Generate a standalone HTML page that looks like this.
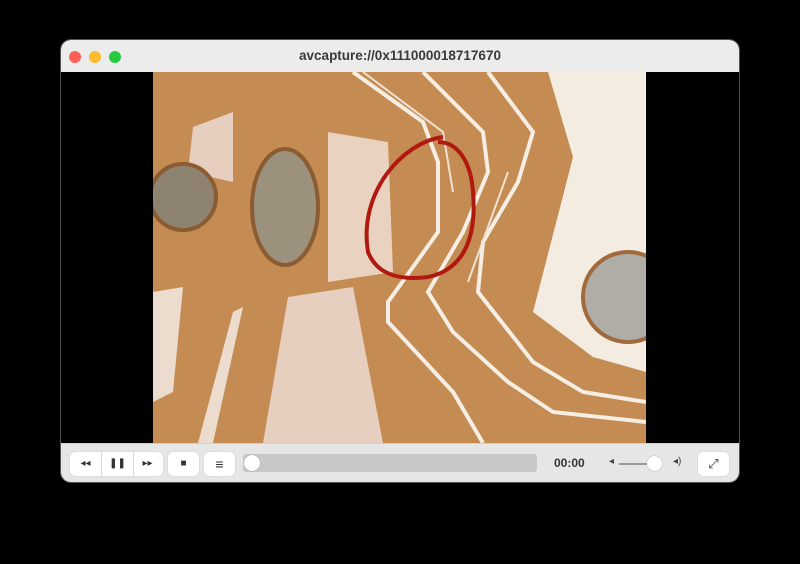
<!DOCTYPE html>
<html><head><style>
body{margin:0;width:800px;height:564px;background:#000;overflow:hidden;font-family:"Liberation Sans",sans-serif}
.win{position:absolute;left:61px;top:40px;width:678px;height:442px;border-radius:10px;overflow:hidden;background:#000;box-shadow:0 0 0 1px #555}
.tb{position:absolute;left:0;top:0;width:678px;height:32px;background:#ececec;text-align:center;line-height:32px;font-size:13.5px;font-weight:bold;color:#3a3a3a}
.dot{position:absolute;top:11px;width:12px;height:12px;border-radius:50%}
.cb{position:absolute;left:0;top:403px;width:678px;height:39px;background:#e6e6e6;border-top:1px solid #d0d0d0}
.btn{position:absolute;top:8px;height:24px;background:#fff;border-radius:5px;box-shadow:0 0 1px #aaa;font-size:10px;color:#333;text-align:center;line-height:24px}
</style></head><body>
<div class="win">
<div class="tb">avcapture://0x111000018717670
<div class="dot" style="left:8px;background:#fe5f57"></div>
<div class="dot" style="left:28px;background:#febc2e"></div>
<div class="dot" style="left:48px;background:#28c840"></div>
</div>
<svg style="position:absolute;left:92px;top:32px" width="493" height="371" viewBox="0 0 493 371">
<rect width="493" height="371" fill="#c48b52"/>
<polygon points="395,0 493,0 493,300 440,285 380,240 420,85" fill="#f4ebe1"/>
<polygon points="175,60 235,70 240,200 175,210" fill="#e9d3c0"/>
<polygon points="135,225 200,215 230,371 110,371" fill="#e6cfbf"/>
<polygon points="40,55 80,40 80,110 35,100" fill="#e6cfbf"/>
<polygon points="0,220 30,215 20,320 0,330" fill="#ecdccd"/>
<polygon points="80,240 90,235 60,371 45,371" fill="#ecdccd"/>
<g fill="none" stroke="#f6eee4" stroke-width="4">
<polyline points="200,0 270,50 285,90 285,160 235,230 235,250 300,320 330,371"/>
<polyline points="270,0 330,60 335,100 310,160 275,220 300,260 355,310 400,340 493,350"/>
<polyline points="335,0 380,60 365,110 330,170 325,220 380,290 430,320 493,330"/>
</g>
<g fill="none" stroke="#f0e2d2" stroke-width="2">
<polyline points="210,0 290,60 300,120"/>
<polyline points="355,100 315,210"/>
</g>
<ellipse cx="30" cy="125" rx="33" ry="33" fill="#8e8370" stroke="#8b5b32" stroke-width="4"/>
<ellipse cx="132" cy="135" rx="33" ry="58" fill="#9c917c" stroke="#8b5b32" stroke-width="4"/>
<circle cx="475" cy="225" r="45" fill="#b0aca6" stroke="#a06a3c" stroke-width="4"/>
<path d="M290,65 C250,70 205,120 215,180 C225,205 250,208 275,205 C300,200 325,180 320,120 C318,90 305,70 285,70" fill="none" stroke="#b01810" stroke-width="4"/>
</svg>
<div class="cb">
<div class="btn" style="left:9px;width:93px"><span style="position:absolute;left:0;width:31px">◂◂</span><span style="position:absolute;left:31px;width:31px;border-left:1px solid #ddd;border-right:1px solid #ddd">❚❚</span><span style="position:absolute;left:62px;width:31px">▸▸</span></div>
<div class="btn" style="left:107px;width:31px">■</div>
<div class="btn" style="left:143px;width:31px;font-size:14px">≡</div>
<div style="position:absolute;left:182px;top:10px;width:294px;height:18px;background:#c8c8c8;border-radius:3px"></div>
<div style="position:absolute;left:183px;top:11px;width:16px;height:16px;border-radius:50%;background:#fff;box-shadow:0 0 1px #777"></div>
<div style="position:absolute;left:493px;top:12px;font-size:12px;font-weight:bold;color:#333">00:00</div>
<div style="position:absolute;left:548px;top:12px;font-size:10px;color:#444">◂</div>
<div style="position:absolute;left:558px;top:19px;width:42px;height:2px;background:#999"></div>
<div style="position:absolute;left:586px;top:12px;width:15px;height:15px;border-radius:50%;background:#fff;box-shadow:0 0 1px #777"></div>
<div style="position:absolute;left:612px;top:12px;font-size:10px;color:#444">◂)</div>
<div class="btn" style="left:637px;width:31px;font-size:13px">⤢</div>
</div>
</div>
</body></html>
